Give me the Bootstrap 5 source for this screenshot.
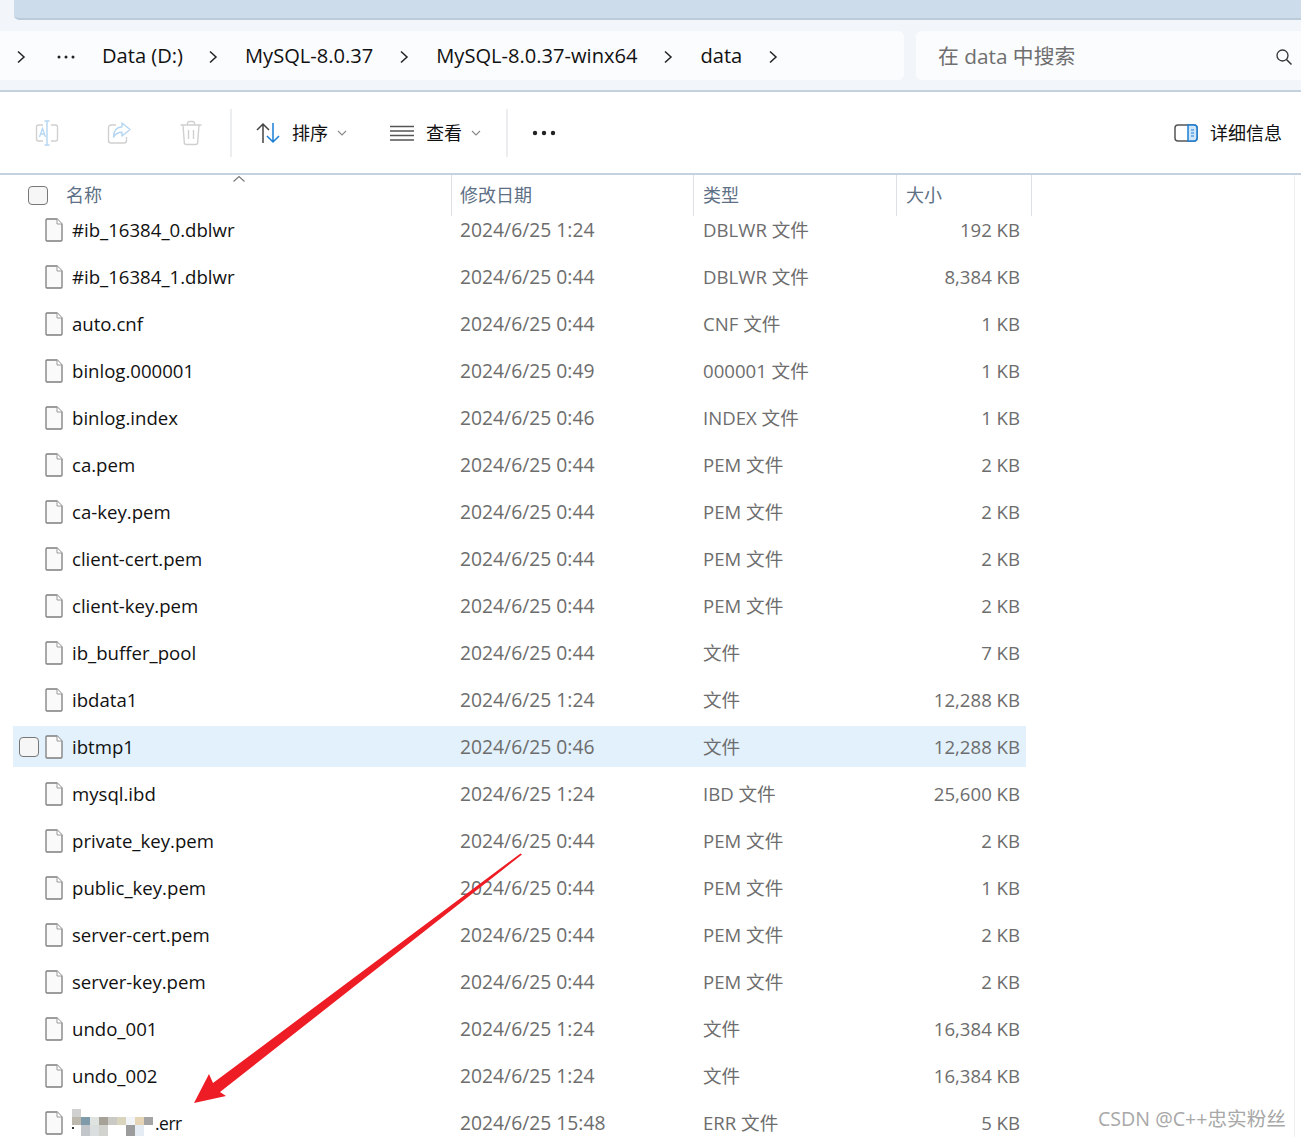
<!DOCTYPE html>
<html lang="zh-CN">
<head>
<meta charset="utf-8">
<title>data</title>
<link rel="stylesheet" href="https://cdn.jsdelivr.net/npm/bootstrap@5.3.0/dist/css/bootstrap.min.css">
<style>
html,body{height:1137px;overflow:hidden;background:#fff}
body{font-family:"Open Sans","Noto Sans CJK SC",sans-serif;position:relative;color:#111}
.shell-top{height:92px;background:#f2f6fa;border-bottom:2px solid #c5d1de}
.tabstrip{height:20px;margin-left:14px;background:#ccdcea;border-bottom:2px solid #bccbd9;border-bottom-left-radius:5px}
.addr-row{height:49px;margin-top:11px;gap:12px}
.addr{width:904px;background:#fbfcfe;border-radius:0 6px 6px 0;font-size:20.1px;padding-left:15px}
.addr-search{flex:1;background:#fbfcfe;border-radius:6px 0 0 6px;padding:0 8px 0 22px;font-size:20.8px;color:#6f6f6f}
.addr-item{white-space:nowrap;padding-top:2px;line-height:1.3}
.chev{flex:none;margin-top:2px}
.tools{height:83px;padding-top:1px;border-bottom:2px solid #c5d1de;font-size:18px}
.tool-slot{width:72px;flex:none}
.tool-sep{width:2px;height:48px;background:#ebedef;flex:none}
.grid-head{height:41px;position:relative;font-size:18px;color:#5d7085}
.hcell{height:41px;border-right:1px solid #dde1e6;padding-top:7px;padding-left:8px;flex:none}
.hname{width:452px;padding-left:66px;position:relative}
.htype{width:203px;padding-left:9px}.hdate{width:242px}.hsize{width:135px;padding-left:9px}
.caret-up{position:absolute;left:232px;top:0}
.tick{border:1.5px solid #777;background:#f6f6f6;border-radius:4px;flex:none}
.tick-head{position:absolute;left:28px;top:11px;width:20px;height:19px}
.files{margin-top:-10px;margin-left:13px;width:1013px}
.frow{height:47px;padding:3px 0;font-size:18.6px}
.frow-in{height:41px;padding-right:6px}
.frow-hover{background:#e2f1fc}
.tick-slot{width:32px;flex:none;padding-left:6px}
.tick-row{display:block;width:20px;height:20px}
.fname{width:397px;flex:none;padding-left:9px;color:#111;white-space:nowrap}
.fdate{width:243px;flex:none;color:#6d6d6d;font-size:19.3px;padding-top:1px}
.ftype{width:200px;flex:none;color:#6d6d6d}
.fsize{flex:1;text-align:right;color:#6d6d6d}
.mosaic{flex:none}
.err-tail{margin-left:1px;font-size:17.5px;letter-spacing:-.5px;padding-top:1px}
.scroll-line{position:absolute;left:1294px;top:175px;bottom:0;width:1px;background:#eef0f2}
.red-arrow{position:absolute;left:0;top:0;pointer-events:none}
.wm{position:absolute;left:1098px;top:1104px;font-size:19.6px;color:#a8a8a8;white-space:nowrap}
</style>
</head>
<body>
<div class="shell-top">
  <div class="tabstrip"></div>
  <div class="addr-row d-flex">
    <div class="addr d-flex align-items-center">
      <svg class="chev" width="12" height="14" viewBox="0 0 12 14"><path d="M3 1.500l6 5.500-6 5.500" fill="none" stroke="#222" stroke-width="1.500"/></svg>
      <svg class="chev" style="margin-left:30px" width="18" height="4" viewBox="0 0 18 4" fill="#222"><circle cx="2" cy="2" r="1.500"/><circle cx="9" cy="2" r="1.500"/><circle cx="16" cy="2" r="1.500"/></svg>
      <span class="addr-item" style="margin-left:27px">Data (D:)</span>
      <svg class="chev" style="margin-left:24px" width="12" height="14" viewBox="0 0 12 14"><path d="M3 1.500l6 5.500-6 5.500" fill="none" stroke="#222" stroke-width="1.500"/></svg>
      <span class="addr-item" style="margin-left:26px">MySQL-8.0.37</span>
      <svg class="chev" style="margin-left:25px" width="12" height="14" viewBox="0 0 12 14"><path d="M3 1.500l6 5.500-6 5.500" fill="none" stroke="#222" stroke-width="1.500"/></svg>
      <span class="addr-item" style="margin-left:26px">MySQL-8.0.37-winx64</span>
      <svg class="chev" style="margin-left:25px" width="12" height="14" viewBox="0 0 12 14"><path d="M3 1.500l6 5.500-6 5.500" fill="none" stroke="#222" stroke-width="1.500"/></svg>
      <span class="addr-item" style="margin-left:26px">data</span>
      <svg class="chev" style="margin-left:25px" width="12" height="14" viewBox="0 0 12 14"><path d="M3 1.500l6 5.500-6 5.500" fill="none" stroke="#222" stroke-width="1.500"/></svg>
    </div>
    <div class="addr-search d-flex align-items-center justify-content-between">
      <span class="addr-item">在 data 中搜索</span>
      <svg class="chev" width="18" height="18" viewBox="0 0 18 18"><circle cx="7.500" cy="7.500" r="5.500" fill="none" stroke="#333" stroke-width="1.300"/><path d="M11.500 11.500l5 5" stroke="#333" stroke-width="1.500"/></svg>
    </div>
  </div>
</div>

<div class="tools d-flex align-items-center">
  <div class="tool-slot d-flex justify-content-center" style="margin-left:11px">
    <svg width="26" height="26" viewBox="0 0 26 26" fill="none"><path d="M9 5H4.500A2 2 0 0 0 2.500 7v12a2 2 0 0 0 2 2H9M17 5h4.500a2 2 0 0 1 2 2v12a2 2 0 0 1-2 2H17" stroke="#d0d0d0" stroke-width="1.400"/><path d="M13 1v24M10.500 1h5M10.500 25h5" stroke="#b5d6f2" stroke-width="1.400"/><path d="M5.500 17l3-8.500 3 8.500M6.700 14h3.600" stroke="#b5d6f2" stroke-width="1.300"/></svg>
  </div>
  <div class="tool-slot d-flex justify-content-center">
    <svg width="26" height="26" viewBox="0 0 26 26" fill="none"><path d="M10 5H5a2.500 2.500 0 0 0-2.500 2.500v13A2.500 2.500 0 0 0 5 23h13a2.500 2.500 0 0 0 2.500-2.500V17" stroke="#d0d0d0" stroke-width="1.400"/><path d="M16 3l8 6.500-8 6.500v-3.800c-4 0-6.500 1.300-8.500 5 0-6.500 3-10 8.500-10.500z" stroke="#b5d6f2" stroke-width="1.400" stroke-linejoin="round"/></svg>
  </div>
  <div class="tool-slot d-flex justify-content-center">
    <svg width="24" height="26" viewBox="0 0 24 26" fill="none" stroke="#d0d0d0" stroke-width="1.400"><path d="M1.500 5h21M8.500 5V3.500A2 2 0 0 1 10.500 1.500h3a2 2 0 0 1 2 2V5M4 5l1.300 17.500A2 2 0 0 0 7.300 24.500h9.400a2 2 0 0 0 2-2L20 5M9.500 10v9M14.500 10v9"/></svg>
  </div>
  <div class="tool-sep" style="margin-left:3px"></div>
  <svg style="margin-left:23px" width="26" height="22" viewBox="0 0 26 22" fill="none" stroke-width="1.500"><path d="M8 21V2M2 8l6-6 6 6" stroke="#444"/><path d="M18 1v19M12 14l6 6 6-6" stroke="#1b7fd4"/></svg>
  <span style="margin-left:11px">排序</span>
  <svg style="margin-left:9px" width="10" height="8" viewBox="0 0 10 8"><path d="M1 2l4 4 4-4" fill="none" stroke="#888" stroke-width="1.100"/></svg>
  <svg style="margin-left:43px" width="24" height="16" viewBox="0 0 24 16" stroke="#555" stroke-width="1.400"><path d="M0 1.500h24M0 6h24M0 10.500h24M0 15h24"/></svg>
  <span style="margin-left:12px">查看</span>
  <svg style="margin-left:9px" width="10" height="8" viewBox="0 0 10 8"><path d="M1 2l4 4 4-4" fill="none" stroke="#888" stroke-width="1.100"/></svg>
  <div class="tool-sep" style="margin-left:25px"></div>
  <svg style="margin-left:24px" width="24" height="6" viewBox="0 0 24 6" fill="#222"><circle cx="3" cy="3" r="2.200"/><circle cx="12" cy="3" r="2.200"/><circle cx="21" cy="3" r="2.200"/></svg>
  <div class="ms-auto d-flex align-items-center" style="margin-right:19px">
    <svg width="24" height="18" viewBox="0 0 24 18" fill="none"><rect x="1" y="1" width="22" height="16" rx="3" stroke="#555" stroke-width="1.500"/><path d="M14 1h6a3 3 0 0 1 3 3v10a3 3 0 0 1-3 3h-6z" fill="#cfe6fa" stroke="#1b7fd4" stroke-width="1.500"/><path d="M17 6h3M17 9h3M17 12h3" stroke="#1b7fd4" stroke-width="1.200"/></svg>
    <span style="margin-left:12px">详细信息</span>
  </div>
</div>

<div class="grid-head d-flex">
  <div class="hcell hname">名称
    <svg class="caret-up" width="14" height="8" viewBox="0 0 14 8"><path d="M1.500 6.500L7 1.500l5.500 5" fill="none" stroke="#777" stroke-width="1.100"/></svg>
    <span class="tick tick-head"></span>
  </div>
  <div class="hcell hdate">修改日期</div>
  <div class="hcell htype">类型</div>
  <div class="hcell hsize">大小</div>
</div>

<div class="files" id="files"></div>

<div class="scroll-line"></div>

<svg class="red-arrow" width="1301" height="1137" viewBox="0 0 1301 1137">
  <path d="M522 854.500L220 1092L226 1096L194 1103L209 1074L213 1083L520.500 853.500Z" fill="#ee1c25"/>
</svg>
<div class="wm">CSDN @C++忠实粉丝</div>

<script>
var data=[
["#ib_16384_0.dblwr","2024/6/25 1:24","DBLWR 文件","192 KB"],
["#ib_16384_1.dblwr","2024/6/25 0:44","DBLWR 文件","8,384 KB"],
["auto.cnf","2024/6/25 0:44","CNF 文件","1 KB"],
["binlog.000001","2024/6/25 0:49","000001 文件","1 KB"],
["binlog.index","2024/6/25 0:46","INDEX 文件","1 KB"],
["ca.pem","2024/6/25 0:44","PEM 文件","2 KB"],
["ca-key.pem","2024/6/25 0:44","PEM 文件","2 KB"],
["client-cert.pem","2024/6/25 0:44","PEM 文件","2 KB"],
["client-key.pem","2024/6/25 0:44","PEM 文件","2 KB"],
["ib_buffer_pool","2024/6/25 0:44","文件","7 KB"],
["ibdata1","2024/6/25 1:24","文件","12,288 KB"],
["ibtmp1","2024/6/25 0:46","文件","12,288 KB"],
["mysql.ibd","2024/6/25 1:24","IBD 文件","25,600 KB"],
["private_key.pem","2024/6/25 0:44","PEM 文件","2 KB"],
["public_key.pem","2024/6/25 0:44","PEM 文件","1 KB"],
["server-cert.pem","2024/6/25 0:44","PEM 文件","2 KB"],
["server-key.pem","2024/6/25 0:44","PEM 文件","2 KB"],
["undo_001","2024/6/25 1:24","文件","16,384 KB"],
["undo_002","2024/6/25 1:24","文件","16,384 KB"],
["@ERR","2024/6/25 15:48","ERR 文件","5 KB"]];
var icon='<svg width="18" height="24" viewBox="0 0 18 24" class="flex-shrink-0"><path d="M1 2a1 1 0 0 1 1-1h10l5 5v16a1 1 0 0 1-1 1H2a1 1 0 0 1-1-1z" fill="#fafafa" stroke="#7d7d7d" stroke-width="1.300"/><path d="M12 1v5h5" fill="#fff" stroke="#9a9a9a" stroke-width="1"/></svg>';
var blocks=[[0,0,"#d0d0d0"],[0,1,"#bcb8ae"],[1,1,"#7f9aa8"],[2,1,"#e0e4e0"],[3,1,"#a6a298"],[4,1,"#cbc9c3"],[5,1,"#d8d4be"],[6,1,"#f2f5f8"],[7,1,"#e6d4b6"],[8,1,"#a4a4a4"],[1,2,"#c2c6ca"],[2,2,"#dadede"],[3,2,"#d2d2ce"],[6,2,"#9c9c9c"],[7,2,"#e6ecf4"]];
var mosaic='<svg class="mosaic" width="82" height="27" viewBox="0 0 82 27">'+blocks.map(function(b){return '<rect x="'+b[0]*9+'" y="'+b[1]*8+'" width="9" height="'+(b[1]==2?11:8)+'" fill="'+b[2]+'"/>'}).join('')+'<rect x="0" y="18" width="2" height="2" fill="#333"/></svg>';
document.getElementById('files').innerHTML=data.map(function(r,i){
 var hover=i==11;
 var nm=r[0]=="@ERR"?mosaic+'<span class="err-tail">.err</span>':r[0];
 return '<div class="frow"><div class="frow-in d-flex align-items-center'+(hover?' frow-hover':'')+'">'
 +'<div class="tick-slot">'+(hover?'<span class="tick tick-row"></span>':'')+'</div>'+icon
 +'<div class="fname d-flex align-items-center">'+nm+'</div><div class="fdate">'+r[1]+'</div><div class="ftype">'+r[2]+'</div><div class="fsize">'+r[3]+'</div></div></div>';
}).join('');
</script>
<script src="https://cdn.jsdelivr.net/npm/bootstrap@5.3.0/dist/js/bootstrap.bundle.min.js"></script>
</body>
</html>
